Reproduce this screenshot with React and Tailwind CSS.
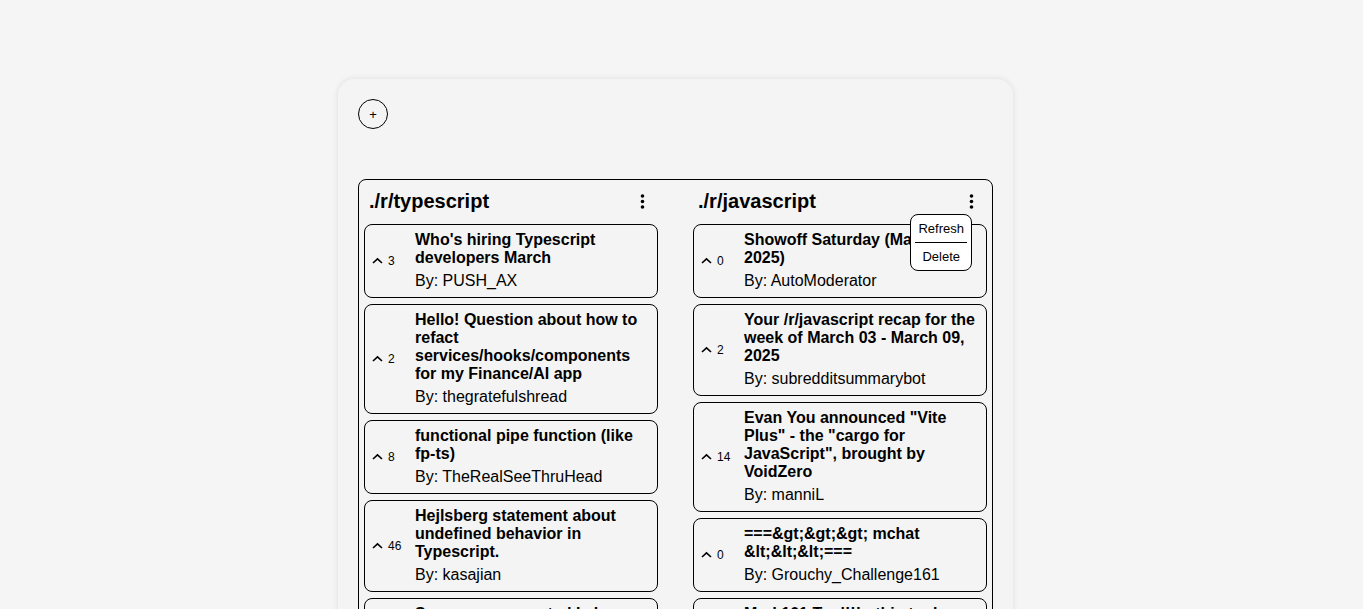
import React from 'react';

const columns = [
  {
    name: './r/typescript',
    posts: [
      { votes: 3, title: "Who's hiring Typescript developers March", author: 'PUSH_AX' },
      { votes: 2, title: 'Hello! Question about how to refact services/hooks/components for my Finance/AI app', author: 'thegratefulshread' },
      { votes: 8, title: 'functional pipe function (like fp-ts)', author: 'TheRealSeeThruHead' },
      { votes: 46, title: 'Hejlsberg statement about undefined behavior in Typescript.', author: 'kasajian' },
      { votes: 5, title: 'Someone suggested I share this here: a typed event emitter', author: 'devloper_42' },
      { votes: 12, title: 'TypeScript 5.8 is now available', author: 'DanielRosenwasser' },
      { votes: 4, title: 'Best way to type a generic reducer?', author: 'strict_mode_fan' },
      { votes: 1, title: 'Monorepo project references and path aliases', author: 'tsconfig_wrangler' },
      { votes: 19, title: 'Why does narrowing not work inside callbacks?', author: 'curious_coder' },
      { votes: 7, title: 'Zod vs Valibot in 2025', author: 'schema_nerd' },
      { votes: 0, title: 'Help with conditional types', author: 'newbie_ts' },
      { votes: 3, title: 'Declaration merging for third party modules', author: 'augment_all' },
    ],
  },
  {
    name: './r/javascript',
    menu: true,
    posts: [
      { votes: 0, title: 'Showoff Saturday (March 08, 2025)', author: 'AutoModerator' },
      { votes: 2, title: 'Your /r/javascript recap for the week of March 03 - March 09, 2025', author: 'subredditsummarybot' },
      { votes: 14, title: 'Evan You announced "Vite Plus" - the "cargo for JavaScript", brought by VoidZero', author: 'manniL' },
      { votes: 0, title: '===&gt;&gt;&gt; mchat &lt;&lt;&lt;===', author: 'Grouchy_Challenge161' },
      { votes: 6, title: 'Mod 101 Tool!!! - this tool makes modding easier', author: 'modder_dude' },
      { votes: 21, title: 'Node.js 23.9 released', author: 'nodejs_news' },
      { votes: 3, title: 'A tiny state machine library in 1kb', author: 'fsm_maker' },
      { votes: 9, title: 'Signals proposal progress update', author: 'tc39_watcher' },
      { votes: 2, title: 'How do you structure large vanilla JS apps?', author: 'no_framework' },
      { votes: 0, title: 'Array grouping is finally here', author: 'groupBy_fan' },
      { votes: 11, title: 'Bun 1.2 vs Node benchmarks', author: 'speed_freak' },
      { votes: 4, title: 'Temporal API polyfill experiences', author: 'date_hater' },
    ],
  },
];

const Dots = () => (
  <svg width="5" height="15" viewBox="0 0 5 15">
    <circle cx="2.5" cy="2" r="1.8" fill="#000" />
    <circle cx="2.5" cy="7.5" r="1.8" fill="#000" />
    <circle cx="2.5" cy="13" r="1.8" fill="#000" />
  </svg>
);

const Chevron = () => (
  <svg width="11" height="7" viewBox="0 0 11 7">
    <polyline points="1,6 5.5,1.8 10,6" fill="none" stroke="#000" strokeWidth="1.6" />
  </svg>
);

const Post = ({ post }) => (
  <div className="flex items-center border border-black rounded-lg pl-[7px] pr-[7px] pt-[6px] pb-[7px]">
    <div className="w-[43px] shrink-0 flex items-center gap-[5px] text-[12px]">
      <Chevron />
      <span>{post.votes}</span>
    </div>
    <div className="flex-1 min-w-0">
      <div className="font-bold text-[16px] leading-[18px]">{post.title}</div>
      <div className="text-[16px] leading-[18px] mt-[5px]">By: {post.author}</div>
    </div>
  </div>
);

const Column = ({ column }) => (
  <div className="relative">
    <div className="h-[39px] flex items-start justify-between pl-[5px] pr-[13px] pt-[2px]">
      <h2 className="text-[20px] leading-[28px] font-bold">{column.name}</h2>
      <button className="p-0 mt-[7px]">
        <Dots />
      </button>
    </div>
    {column.menu && (
      <div className="absolute right-[15px] top-[29px] z-10 bg-white border border-black rounded-lg px-[4px] text-[13px] leading-[15px]">
        <div className="py-[6px] px-[3px] border-b border-black text-center">Refresh</div>
        <div className="py-[6px] px-[3px] text-center">Delete</div>
      </div>
    )}
    <div className="flex flex-col gap-[6px]">
      {column.posts.map((post, i) => (
        <Post key={i} post={post} />
      ))}
    </div>
  </div>
);

export default function App() {
  return (
    <div className="min-h-screen bg-[#f5f5f5] pt-[79px] pb-20 pr-[12px] text-black" style={{ fontFamily: '"Liberation Sans", Arial, sans-serif' }}>
      <div className="w-[675px] mx-auto bg-[#f4f4f4] rounded-2xl shadow-[0_0_6px_rgba(0,0,0,0.1)] p-5">
        <button className="w-[30px] h-[30px] rounded-full border border-black flex items-center justify-center text-[13px] leading-none">
          +
        </button>
        <div className="mt-[50px] border border-black rounded-lg p-[5px] grid grid-cols-2 gap-[35px]">
          {columns.map((c) => (
            <Column key={c.name} column={c} />
          ))}
        </div>
      </div>
    </div>
  );
}
